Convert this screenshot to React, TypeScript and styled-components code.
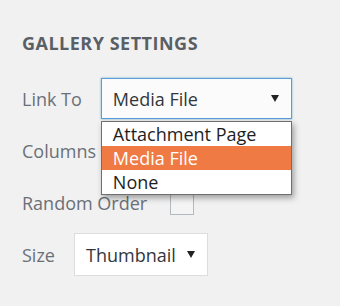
import React from 'react';
import styled, {createGlobalStyle} from 'styled-components';

const GlobalStyle = createGlobalStyle`
  html, body {
    margin: 0;
    padding: 0;
    background: #f1f1f1;
  }
  body {
    font-family: "Open Sans", "DejaVu Sans", sans-serif;
  }
`

type Option = {
    label: string
    selected?: boolean
}

const linkOptions: Option[] = [
    {label: 'Attachment Page'},
    {label: 'Media File', selected: true},
    {label: 'None'},
]

export default function App() {
    return (
        <>
            <GlobalStyle/>
            <Panel>
                <Title>Gallery Settings</Title>

                <Row>
                    <Label>Link To</Label>
                    <SelectWrap>
                        <Select width={191} focused>
                            <SelectValue>Media File</SelectValue>
                            <Arrow/>
                        </Select>
                        <OptionList>
                            {linkOptions.map(o => (
                                <OptionItem key={o.label} selected={o.selected}>{o.label}</OptionItem>
                            ))}
                        </OptionList>
                    </SelectWrap>
                </Row>

                <Row>
                    <Label>Columns</Label>
                </Row>

                <Row>
                    <Label>Random Order</Label>
                    <Checkbox/>
                </Row>

                <Row>
                    <Label>Size</Label>
                    <Select width={134} tall>
                        <SelectValue>Thumbnail</SelectValue>
                        <Arrow/>
                    </Select>
                </Row>
            </Panel>
        </>
    );
}

const Panel = styled.div`
  padding: 30px 0 0 22px;
  display: flex;
  flex-direction: column;
`

const Title = styled.h2`
  margin: 0 0 22px;
  font-size: 18px;
  line-height: 26px;
  font-weight: 700;
  letter-spacing: 0.5px;
  text-transform: uppercase;
  color: #5a5f66;
`

const Row = styled.div`
  display: flex;
  align-items: center;
  gap: 19px;
  height: 41px;
  margin-bottom: 11px;
`

const Label = styled.span`
  font-size: 18px;
  color: #6b7077;
`

const SelectWrap = styled.div`
  position: relative;
`

type SelectProps = {
    width: number
    focused?: boolean
    tall?: boolean
}

const Select = styled.div<SelectProps>`
  box-sizing: border-box;
  width: ${p => p.width}px;
  height: ${p => p.tall ? 43 : 41}px;
  display: flex;
  align-items: center;
  justify-content: space-between;
  padding: 0 12px 0 11px;
  background: ${p => p.focused ? '#fbfbfb' : '#fff'};
  border: 1px solid ${p => p.focused ? '#5b9dd9' : '#dddddd'};
  box-shadow: ${p => p.focused ? '0 0 2px rgba(30, 140, 190, 0.6)' : 'none'};
`

const SelectValue = styled.span`
  font-size: 18px;
  color: #32373c;
`

const Arrow = styled.span`
  width: 0;
  height: 0;
  border-left: 4px solid transparent;
  border-right: 4px solid transparent;
  border-top: 7px solid #222;
`

const OptionList = styled.ul`
  position: absolute;
  top: 43px;
  left: 0;
  width: 191px;
  box-sizing: border-box;
  margin: 0;
  padding: 0;
  list-style: none;
  background: #fff;
  border: 1px solid #6f6f6f;
  box-shadow: 2px 3px 6px rgba(0, 0, 0, 0.35);
  z-index: 2;
`

const OptionItem = styled.li<{ selected?: boolean }>`
  height: 24px;
  line-height: 24px;
  padding-left: 11px;
  font-size: 18px;
  color: ${p => p.selected ? '#fff' : '#1e1e1e'};
  background: ${p => p.selected ? '#f07a44' : '#fff'};
`

const Checkbox = styled.span`
  box-sizing: border-box;
  width: 24px;
  height: 24px;
  margin-left: 4px;
  background: #f4f4f4;
  border: 1px solid #b4b9be;
`
